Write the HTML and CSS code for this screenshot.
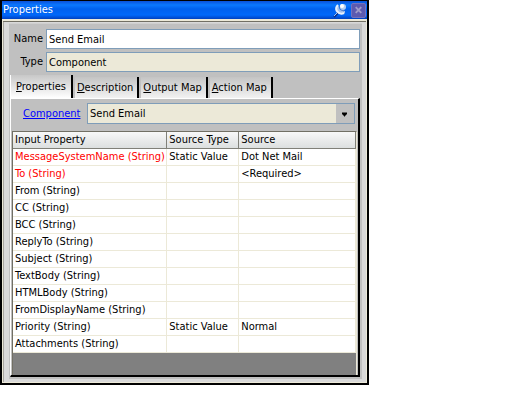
FILE: index.html
```html
<!DOCTYPE html>
<html lang="en">
<head>
    <meta charset="UTF-8">
    <meta name="viewport" content="width=device-width, initial-scale=1.0">
    <title>Properties</title>
    <link rel="stylesheet" href="styles.css">
</head>
<body>
    <div class="window">
        <div class="titlebar">
            <span class="title">Properties</span>
            <button type="button" class="pin" aria-label="Pin">
                <svg width="15" height="16" viewBox="0 0 15 16">
                    <path d="M1 15 L5 11" stroke="#0a2f8c" stroke-width="2"/>
                    <path d="M1 14 L5 10" stroke="#9cc4f8" stroke-width="1"/>
                    <path d="M5 3 Q1 6 3 10 Q7 14 12 11 L12 9 L7 8 Z" fill="#a4bfea"/>
                    <path d="M5 3 Q2 6 4 9 Q7 13 11 11" fill="none" stroke="#e8f0fc" stroke-width="2"/>
                    <path d="M7 4 Q6 8 11 9" fill="none" stroke="#5c82c4" stroke-width="1"/>
                    <circle cx="10" cy="5" r="3" fill="#b8cef0"/>
                    <circle cx="9" cy="4" r="2" fill="#ffffff"/>
                </svg>
            </button>
            <button type="button" class="close" aria-label="Close">
                <svg width="14" height="14" viewBox="0 0 14 14">
                    <path d="M4 4 L10 10 M10 4 L4 10" stroke="#a09cca" stroke-width="2"/>
                </svg>
            </button>
        </div>
        <div class="frame">
            <form class="content">
                <div class="field">
                    <label for="name">Name</label>
                    <input type="text" id="name" value="Send Email">
                </div>
                <div class="field">
                    <label for="type">Type</label>
                    <input type="text" id="type" class="readonly" value="Component" readonly>
                </div>

                <div class="tabs">
                    <button type="button" class="tab active"><u>P</u>roperties</button>
                    <button type="button" class="tab"><u>D</u>escription</button>
                    <button type="button" class="tab"><u>O</u>utput Map</button>
                    <button type="button" class="tab"><u>A</u>ction Map</button>
                </div>

                <div class="panel">
                    <div class="component">
                        <a href="#" id="component-label">Component</a>
                        <div class="combo">
                            <select aria-labelledby="component-label">
                                <option>Send Email</option>
                            </select>
                            <svg class="arrow" width="18" height="18" viewBox="0 0 18 18">
                                <path d="M6 8 H11 V10 H10 V11 H9 V12 H8 V11 H7 V10 H6 Z" fill="#000000"/>
                            </svg>
                        </div>
                    </div>

                    <div class="grid">
                        <table>
                            <thead>
                                <tr><th class="col-input">Input Property</th><th class="col-type">Source Type</th><th>Source</th></tr>
                            </thead>
                            <tbody>
                                <tr><td class="required">MessageSystemName (String)</td><td>Static Value</td><td>Dot Net Mail</td></tr>
                                <tr><td class="required">To (String)</td><td></td><td>&lt;Required&gt;</td></tr>
                                <tr><td>From (String)</td><td></td><td></td></tr>
                                <tr><td>CC (String)</td><td></td><td></td></tr>
                                <tr><td>BCC (String)</td><td></td><td></td></tr>
                                <tr><td>ReplyTo (String)</td><td></td><td></td></tr>
                                <tr><td>Subject (String)</td><td></td><td></td></tr>
                                <tr><td>TextBody (String)</td><td></td><td></td></tr>
                                <tr><td>HTMLBody (String)</td><td></td><td></td></tr>
                                <tr><td>FromDisplayName (String)</td><td></td><td></td></tr>
                                <tr><td>Priority (String)</td><td>Static Value</td><td>Normal</td></tr>
                                <tr><td>Attachments (String)</td><td></td><td></td></tr>
                            </tbody>
                        </table>
                    </div>
                </div>
            </form>
        </div>
    </div>
</body>
</html>
```

FILE: styles.css
```css
* {
    box-sizing: border-box;
}

body {
    margin: 0;
    background-color: #fff;
    color: #000;
}

body, button, input, select {
    font-family: Tahoma, "DejaVu Sans Condensed", "Liberation Sans", sans-serif;
    font-size: 11px;
    line-height: 16px;
}

button {
    border: none;
    padding: 0;
}

.window {
    width: 70%;
    border: 2px solid #000;
    border-top-width: 1px;
}

.titlebar {
    display: flex;
    align-items: center;
    height: 18px;
    padding: 0 1px;
    background: linear-gradient(#0a50d8, #0a78ff 4px, #0060ee 8px, #0068fa 14px, #0040c0);
    color: #fff;
}

.title {
    flex: 1;
    line-height: 18px;
}

.pin, .close {
    display: flex;
    align-items: center;
    justify-content: center;
}

.pin {
    width: 16px;
    height: 17px;
    margin-right: 2px;
    background: none;
}

.close {
    width: 15px;
    height: 15px;
    background-color: #5c5ab0;
    border: 1px solid #7472bc;
    border-radius: 2px;
}

.frame {
    padding: 2px 4px 3px 6px;
    background-color: #d9d9d9;
    border: 1px solid #ece9d8;
    border-top: 2px solid #ece9d8;
    box-shadow: inset 0 1px #716f64, inset 1px 0 #a8a6a0;
}

.content {
    padding: 5px 2px 2px 1px;
    background-color: #c0c0c0;
    border-top: 1px solid #cfcfcf;
}

.field {
    display: flex;
    align-items: center;
    margin-bottom: 3px;
}

.field label {
    width: 36px;
    padding-right: 3px;
    text-align: right;
}

.field input {
    flex: 1;
    min-width: 0;
    height: 20px;
    padding: 0 2px;
    background-color: #fff;
    border: 1px solid #7f9db9;
}

.field .readonly {
    background-color: #ece9d8;
}

.tabs {
    display: flex;
    align-items: flex-end;
    gap: 2px;
}

.tab {
    height: 21px;
    padding: 0 4px 0 2px;
    background: linear-gradient(#c4c4c4, #f2f2f2);
    border-right: 2px solid #000;
    white-space: nowrap;
}

.tab.active {
    height: 23px;
    padding: 0 5px;
    background: linear-gradient(#c8c8c8, #ffffff);
    border-left: 1px solid #fff;
}

.panel {
    padding: 4px 1px 0 1px;
    border: 1px solid #fff;
    border-right: 2px solid #000;
    border-bottom: 2px solid #000;
}

.component {
    display: flex;
    align-items: center;
    padding: 0 2px 7px 11px;
}

.component a {
    width: 64px;
    color: #0000ff;
}

.combo {
    display: grid;
    flex: 1;
    grid-template-columns: 1fr 18px;
    height: 21px;
    background-color: #ece9d8;
    border: 1px solid #7f9db9;
}

.combo select {
    grid-column: 1 / 3;
    grid-row: 1;
    padding: 0 2px;
    appearance: none;
    background: none;
    border: none;
}

.arrow {
    grid-column: 2;
    grid-row: 1;
    height: 100%;
    background-color: #c0c0c0;
    pointer-events: none;
}

.grid {
    padding-bottom: 22px;
    background-color: #808080;
    border-top: 1px solid #716f64;
    border-left: 1px solid #716f64;
    border-right: 1px solid #ece9d8;
}

table {
    width: 100%;
    table-layout: fixed;
    border-collapse: separate;
    border-spacing: 0;
    background-color: #fff;
}

th, td {
    height: 17px;
    padding: 0 2px;
    border-right: 1px solid #ece9d8;
    border-bottom: 1px solid #ece9d8;
    font-weight: normal;
    text-align: left;
    white-space: nowrap;
}

th {
    background: linear-gradient(#f8f8f8, #dcdfdf);
    border-right-color: #808078;
    border-bottom-color: #808078;
}

.col-input {
    width: 45%;
}

.col-type {
    width: 21%;
}

.required {
    color: #ff0000;
}
```
